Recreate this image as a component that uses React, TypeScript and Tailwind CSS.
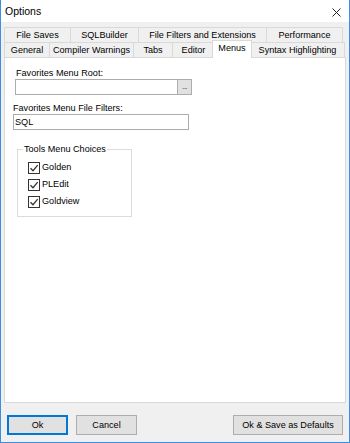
import React from 'react';

const font = { fontFamily: '"Liberation Sans", Arial, sans-serif' };

const topTabs = [
  { label: 'File Saves', w: 'w-[66px]' },
  { label: 'SQLBuilder', w: 'w-[68px]' },
  { label: 'File Filters and Extensions', w: 'w-[128px]' },
  { label: 'Performance', w: 'w-[77px] border-r' },
];

const Tab = ({ label, w }: { label: string; w: string }) => (
  <div className={`${w} h-[15px] border-t border-l border-[#d9d9d9] flex items-center justify-center leading-[11px] whitespace-nowrap`}>
    {label}
  </div>
);

const Check = ({ label }: { label: string }) => (
  <div className="h-[17px] flex items-center">
    <div className="w-[12px] h-[12px] border border-[#333333] bg-white flex items-center justify-center">
      <svg width="10" height="10" viewBox="0 0 10 10">
        <path d="M1.5 5.2 L4 7.7 L8.7 2.2" fill="none" stroke="#333333" strokeWidth="1.3" />
      </svg>
    </div>
    <span className="ml-[2px] leading-[11px]">{label}</span>
  </div>
);

export default function App() {
  return (
    <div
      style={font}
      className="w-[350px] h-[443px] bg-[#f0f0f0] border-x border-b border-[#3d8ee0] text-black text-[9.1px] flex flex-col"
    >
      {/* title bar */}
      <div className="h-[22px] bg-white flex items-center justify-between pl-[4px] pr-[8px] shrink-0">
        <span className="text-[10.5px] leading-[12px]">Options</span>
        <svg width="9" height="9" viewBox="0 0 9 9" className="mt-[2px]">
          <path d="M0.5 0.5 L8.5 8.5 M8.5 0.5 L0.5 8.5" stroke="#222" strokeWidth="1" />
        </svg>
      </div>

      {/* tab strip */}
      <div className="pl-[3px] pt-[5px]">
        <div className="flex">
          {topTabs.map((t) => (
            <Tab key={t.label} {...t} />
          ))}
        </div>
        <div className="flex items-end h-[15px]">
          <Tab label="General" w="w-[45px]" />
          <Tab label="Compiler Warnings" w="w-[84px]" />
          <Tab label="Tabs" w="w-[39px]" />
          <Tab label="Editor" w="w-[42px]" />
          <div className="w-[40px] h-[18px] -mx-[2px] -mb-px relative z-10 bg-white border-x border-t border-[#d9d9d9] flex items-start justify-center pt-[2px] leading-[11px]">
            Menus
          </div>
          <Tab label="Syntax Highlighting" w="w-[95px] border-r" />
        </div>

        {/* page */}
        <div className="w-[342px] h-[346px] bg-white border border-[#d9d9d9] flex flex-col items-start">
          <div className="ml-[11px] mt-[10px] h-[11px] leading-[11px]">Favorites Menu Root:</div>
          <div className="ml-[10px] w-[177px] h-[16px] border border-[#acacac] bg-white flex justify-end">
            <div className="w-[14px] h-[14px] bg-[#e1e1e1] border-l border-[#adadad] flex items-center justify-center">
              <span className="text-[8px] leading-[6px] tracking-[-0.5px] text-[#333]">...</span>
            </div>
          </div>
          <div className="ml-[8px] mt-[8px] h-[11px] leading-[11px]">Favorites Menu File Filters:</div>
          <div className="ml-[8px] w-[176px] h-[16px] border border-[#acacac] bg-white pl-[1px] flex items-center leading-[11px]">
            SQL
          </div>
          <fieldset className="ml-[12px] mt-[14px] w-[115px] border border-[#dcdcdc] pb-[6px]">
            <legend className="ml-[5px] px-[1px] leading-[11px]">Tools Menu Choices</legend>
            <div className="pl-[10px] pt-[4px]">
              <Check label="Golden" />
              <Check label="PLEdit" />
              <Check label="Goldview" />
            </div>
          </fieldset>
        </div>
      </div>

      {/* buttons */}
      <div className="flex items-center mt-[12px] pl-[6px] pr-[6px]">
        <button className="w-[61px] h-[20px] bg-[#e1e1e1] border border-[#0078d7] shadow-[inset_0_0_0_1px_#0078d7] leading-[11px]">Ok</button>
        <button className="ml-[8px] w-[61px] h-[20px] bg-[#e1e1e1] border border-[#adadad] leading-[11px]">Cancel</button>
        <button className="ml-auto w-[110px] h-[20px] bg-[#e1e1e1] border border-[#adadad] leading-[11px]">Ok &amp; Save as Defaults</button>
      </div>
    </div>
  );
}
